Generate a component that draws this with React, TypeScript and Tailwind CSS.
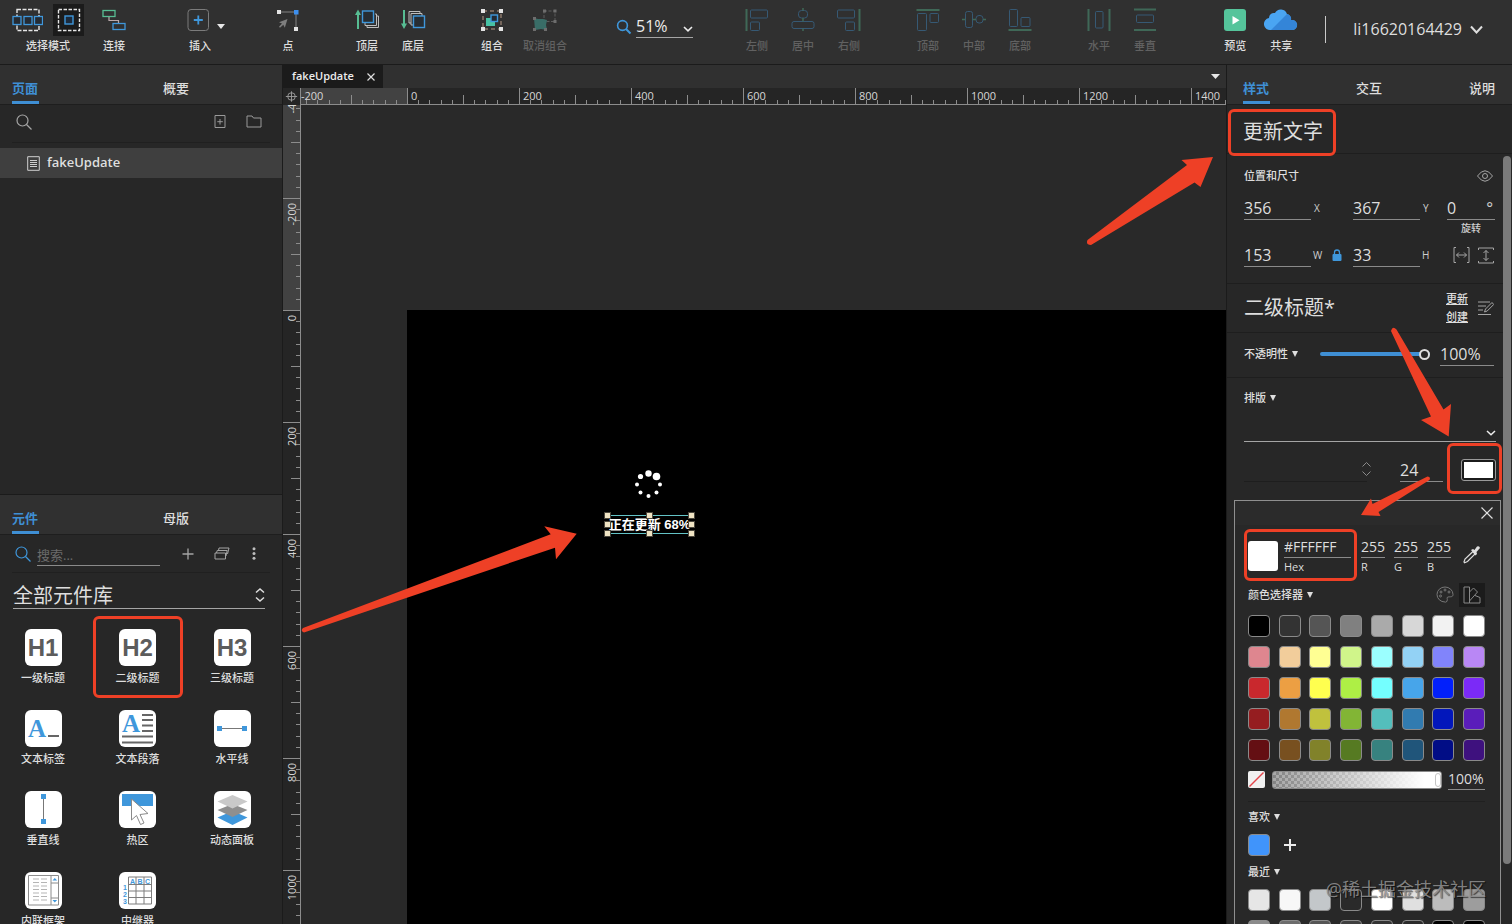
import { useState } from "react";
import type { ReactNode } from "react";

const blue = "#3f97db";
const green = "#57bd93";
const red = "#ee4026";

const palette = [
  "#000000", "#333333", "#555555", "#808080", "#aaaaaa", "#d7d7d7", "#f2f2f2", "#ffffff",
  "#de868f", "#f2cd9b", "#ffff93", "#d0f58a", "#9bffff", "#93d2f5", "#8184fb", "#b987f5",
  "#c9282d", "#ec9f43", "#ffff4f", "#aeef45", "#74ffff", "#47a5ea", "#0220fb", "#7b2af7",
  "#951d20", "#b07830", "#c0c13d", "#82b535", "#54bebc", "#317bb0", "#0217bb", "#5a1dba",
  "#640f13", "#785020", "#81822a", "#567a22", "#37827f", "#20557a", "#010d86", "#3e117e",
];

const recents = [
  "#e6e6e6", "#f7f7f7", "#c3c7ca", "#2a2a2a", "#ffffff", "#e0e0e0", "#bcbcbc", "#9d9d9d",
  "#8a8a8a", "#6c6c6c", "#555555", "#3f3f3f", "#333333", "#2a2a2a", "#000000", "#000000",
];

function Tool({ label, dim, wide, children }: { label: string; dim?: boolean; wide?: boolean; children: ReactNode }) {
  return (
    <button
      className={`flex flex-col items-center gap-1.5 pt-2 ${wide ? "w-[60px]" : "w-[46px]"} ${dim ? "text-[#616161]" : "text-[#dedede]"}`}
      disabled={dim}
    >
      <svg width="28" height="24" viewBox="0 0 28 24" fill="none" className={dim ? "opacity-40" : ""}>
        {children}
      </svg>
      <span className="text-[11px] leading-4 font-medium whitespace-nowrap">{label}</span>
    </button>
  );
}

function TopBar() {
  return (
    <header className="flex h-[65px] shrink-0 border-b border-[#1b1b1b] bg-[#303030] pl-2 pr-[29px]">
      <div className="flex w-[80px] flex-col items-center gap-0.5 pt-1 text-[#dedede]">
        <div className="flex gap-[10px]">
          <button aria-label="相交选择" className="flex h-8 w-[31px] items-center justify-center">
            <svg width="31" height="24" viewBox="0 0 31 24" fill="none">
              <rect x="5" y="1.5" width="22" height="21" stroke="#e6e6e6" strokeWidth="1.4" strokeDasharray="4 1.5" />
              <rect x="1" y="8.5" width="8" height="8" fill="#252b33" stroke={blue} strokeWidth="1.3" />
              <rect x="12" y="8.5" width="8" height="8" fill="#252b33" stroke={blue} strokeWidth="1.3" />
              <rect x="22.5" y="8.5" width="8" height="8" fill="#252b33" stroke={blue} strokeWidth="1.3" />
            </svg>
          </button>
          <button aria-label="包含选择" className="flex h-8 w-[31px] items-center justify-center bg-[#1b1b1b]">
            <svg width="24" height="24" viewBox="0 0 24 24" fill="none">
              <rect x="1.5" y="1.5" width="21" height="21" stroke="#e6e6e6" strokeWidth="1.4" strokeDasharray="3.5 1.5" />
              <rect x="8" y="8" width="8" height="8" fill="#1c2a3b" stroke={blue} strokeWidth="1.4" />
            </svg>
          </button>
        </div>
        <span className="text-[11px] leading-4 font-medium">选择模式</span>
      </div>
      <div className="ml-[3px] flex">
        <Tool label="连接">
          <rect x="3" y="2.5" width="12" height="6" stroke={green} strokeWidth="1.3" />
          <rect x="13" y="15.5" width="12" height="6" stroke={blue} strokeWidth="1.3" />
          <path d="M9 9v3.500h9.500v2.500" stroke="#b9a9ab" strokeWidth="1.2" />
        </Tool>
      </div>
      <div className="ml-10 flex">
        <div className="relative flex">
          <Tool label="插入">
            <rect x="2" y="1.5" width="20.5" height="21" rx="3" stroke="#7b7b7b" />
            <path d="M12.300 7.500v9M7.800 12h9" stroke={blue} strokeWidth="1.8" />
          </Tool>
          <svg width="8" height="5" viewBox="0 0 8 5" className="absolute left-10 top-[24px]">
            <path d="M0 0h8l-4 5z" fill="#e8e8e8" />
          </svg>
        </div>
      </div>
      <div className="ml-[42px] flex">
        <Tool label="点">
          <path d="M5 4h17v17" stroke="#828282" />
          <rect x="3" y="2" width="4" height="4" fill="#e3e3e3" />
          <rect x="20" y="2" width="4.5" height="4.5" fill="#3d8fee" />
          <rect x="20" y="19" width="4" height="4" fill="#e3e3e3" />
          <path d="M13.500 11l-8.500 3.200 3 1.400-3 3.200 1 1 3.300-3 1.500 3z" fill="#7e7e7e" />
        </Tool>
      </div>
      <div className="ml-[33px] flex">
        <Tool label="顶层">
          <path d="M5 21V4" stroke={green} strokeWidth="2" />
          <path d="M2 7L5 1.500 8 7z" fill={green} />
          <path d="M14 17v2.500h11.500V8H24" stroke="#bdbdbd" />
          <path d="M12 15v2.500h11.500V6H22" stroke="#bdbdbd" />
          <rect x="9.5" y="3" width="11" height="11.5" fill="#272d33" stroke={blue} strokeWidth="1.4" />
        </Tool>
        <Tool label="底层">
          <path d="M5 2v17" stroke={green} strokeWidth="2" />
          <path d="M2 15.500L5 21l3-5.500z" fill={green} />
          <path d="M12 15h-2V3.500h11V6" stroke="#bdbdbd" />
          <path d="M14 17h-2V5.500h11V8" stroke="#bdbdbd" />
          <rect x="14.5" y="8" width="11" height="11.5" fill="#272d33" stroke={blue} strokeWidth="1.4" />
        </Tool>
      </div>
      <div className="ml-[33px] flex">
        <Tool label="组合">
          <rect x="5" y="3" width="18" height="18" stroke="#b89a86" strokeDasharray="4 3" />
          <path d="M8 10h6v4h3v4H8z" fill="#48c2a4" />
          <rect x="13" y="7" width="6.5" height="6.5" fill="#232a33" stroke={blue} strokeWidth="1.4" />
          <path d="M3 1h4v4H3zM21 1h4v4h-4zM3 19h4v4H3zM21 19h4v4h-4z" fill="#e3e3e3" />
        </Tool>
        <Tool label="取消组合" dim wide>
          <rect x="13" y="3" width="11" height="10.5" stroke="#a0a0a0" strokeDasharray="3 1.5" />
          <path d="M3 10l4 1h5l4 1-1 5 1 5-6-1-6 1z" fill="#48c8bb" />
          <path d="M12 1.500h3v3h-3zM22.500 1.500h3v3h-3zM22.500 12h3v3h-3zM2 9h3v3H2zM2 20h3v3H2zM13 20h3v3h-3z" fill="#c8c8c8" />
        </Tool>
      </div>
      <div className="ml-[41px] flex w-[78px] items-start gap-1 pt-[14px]">
        <svg width="16" height="16" viewBox="0 0 16 16" fill="none" className="mt-[5px] shrink-0">
          <circle cx="6.5" cy="6.5" r="4.9" stroke={blue} strokeWidth="1.6" />
          <path d="M10 10l4.500 4.500" stroke={blue} strokeWidth="2" />
        </svg>
        <div className="relative w-[57px]">
          <select aria-label="缩放" className="h-[23px] w-full appearance-none border-b border-[#a5a5a5] bg-transparent text-base leading-5 text-[#ececec]">
            <option>51%</option>
          </select>
          <svg width="10" height="6" viewBox="0 0 10 6" fill="none" className="pointer-events-none absolute right-0 top-[12px]">
            <path d="M1 1l4 3.800L9 1" stroke="#ececec" strokeWidth="1.6" />
          </svg>
        </div>
      </div>
      <div className="ml-10 flex">
        <Tool label="左侧" dim>
          <path d="M3.500 1v22" stroke={green} strokeWidth="2" />
          <rect x="7.5" y="2" width="17" height="8" rx="1" stroke={blue} />
          <rect x="7.5" y="14" width="9" height="8.5" rx="1" stroke={blue} />
        </Tool>
        <Tool label="居中" dim>
          <rect x="9.5" y="2.5" width="9" height="7.5" rx="3" stroke={blue} />
          <rect x="3" y="13.5" width="22" height="7" rx="2" stroke={blue} />
          <path d="M14 0v2.500M14 10v3.500M14 20.500V23" stroke={green} strokeWidth="1.5" />
        </Tool>
        <Tool label="右侧" dim>
          <path d="M24.500 1v22" stroke={green} strokeWidth="2" />
          <rect x="2.5" y="2" width="17" height="8" rx="1" stroke={blue} />
          <rect x="10.5" y="14" width="9" height="8.5" rx="1" stroke={blue} />
        </Tool>
      </div>
      <div className="ml-[33px] flex">
        <Tool label="顶部" dim>
          <path d="M2.500 2h23" stroke={green} strokeWidth="2" />
          <rect x="3.5" y="5.5" width="9" height="17" rx="1" stroke={blue} />
          <rect x="16" y="5.5" width="8.5" height="9" rx="1" stroke={blue} />
        </Tool>
        <Tool label="中部" dim>
          <rect x="5.5" y="3.5" width="7" height="16" rx="2" stroke={blue} />
          <rect x="16" y="7.5" width="7" height="7.5" rx="3" stroke={blue} />
          <path d="M2 11.500h3.500M12.500 11.500H16M23 11.500h3" stroke={green} strokeWidth="1.5" />
        </Tool>
        <Tool label="底部" dim>
          <path d="M2.500 22h23" stroke={green} strokeWidth="2" />
          <rect x="3.5" y="1.5" width="8" height="17" rx="1" stroke={blue} />
          <rect x="15" y="9.5" width="9" height="9" rx="1" stroke={blue} />
        </Tool>
      </div>
      <div className="ml-[33px] flex">
        <Tool label="水平" dim>
          <path d="M3.500 1v22M24.500 1v22" stroke={green} strokeWidth="2" />
          <rect x="10.5" y="3.5" width="7.5" height="16.5" rx="1" stroke={blue} />
        </Tool>
        <Tool label="垂直" dim>
          <path d="M3 1.500h22M3 22h22" stroke={green} strokeWidth="2" />
          <rect x="5.5" y="7" width="17" height="7.5" rx="1" stroke={blue} />
        </Tool>
      </div>
      <div className="ml-auto flex">
        <Tool label="预览">
          <rect x="3" y="1" width="22" height="22" rx="3" fill="#55c49b" />
          <path d="M11.500 8v8.500l7-4.200z" fill="#fff" />
        </Tool>
        <button className="flex w-[46px] flex-col items-center gap-1.5 pt-2 text-[#dedede]">
          <svg width="34" height="24" viewBox="0 0 34 24">
            <path d="M7 22a6 6 0 0 1-2-12 5 5 0 0 1 6-5 6.500 6.500 0 0 1 12 1 5 5 0 0 1 4 6 5 5 0 0 1 2 10z" fill="#4aa5f2" />
            <path d="M7 22L20 9l3-3a5 5 0 0 1 4 6 5 5 0 0 1 2 10z" fill="#3485d8" />
          </svg>
          <span className="text-[11px] leading-4 font-medium">共享</span>
        </button>
        <div className="ml-[21px] mt-4 h-[27px] w-px bg-[#c9c9c9]" />
        <button className="ml-[27px] flex h-[58px] items-center gap-2 text-base text-[#dedede]">
          li16620164429
          <svg width="13" height="9" viewBox="0 0 13 9" fill="none">
            <path d="M1 1.500l5.500 6L12 1.500" stroke="#dedede" strokeWidth="2" />
          </svg>
        </button>
      </div>
    </header>
  );
}

function Tab({ label, active }: { label: string; active?: boolean }) {
  return (
    <button
      role="tab"
      aria-selected={!!active}
      className={`w-[27px] whitespace-nowrap border-b-[3px] pb-[3px] text-left text-[13px] leading-5 ${
        active ? "border-[#3f8fd4] font-bold text-[#3f8fd4]" : "border-transparent font-medium text-[#dedede]"
      }`}
    >
      {label}
    </button>
  );
}

function SearchIcon({ color }: { color: string }) {
  return (
    <svg width="16" height="16" viewBox="0 0 16 16" fill="none" className="shrink-0">
      <circle cx="6.5" cy="6.5" r="5.5" stroke={color} strokeWidth="1.2" />
      <path d="M10.500 10.500l5 5" stroke={color} strokeWidth="1.2" />
    </svg>
  );
}

const widgets: { label: string; heading?: string; icon?: ReactNode }[] = [
  { label: "一级标题", heading: "H1" },
  { label: "二级标题", heading: "H2" },
  { label: "三级标题", heading: "H3" },
  {
    label: "文本标签",
    icon: (
      <>
        <text x="3" y="27" fontSize="25" fontWeight="bold" fontFamily="Liberation Serif, serif" fill={blue}>A</text>
        <path d="M23 26h11" stroke="#666" strokeWidth="2" />
      </>
    ),
  },
  {
    label: "文本段落",
    icon: (
      <>
        <text x="3" y="22" fontSize="25" fontWeight="bold" fontFamily="Liberation Serif, serif" fill={blue}>A</text>
        <path d="M23 5h11M23 10h11M23 15.500h11M23 21h11M3 26.500h31M3 32.500h31" stroke="#666" strokeWidth="1.8" />
      </>
    ),
  },
  {
    label: "水平线",
    icon: (
      <>
        <path d="M6 18.500h25" stroke="#777" />
        <path d="M3 16h5v5H3zM28 16h5v5h-5z" fill={blue} />
      </>
    ),
  },
  {
    label: "垂直线",
    icon: (
      <>
        <path d="M18.500 6v25" stroke="#777" />
        <path d="M16 3h5v5h-5zM16 28h5v5h-5z" fill={blue} />
      </>
    ),
  },
  {
    label: "热区",
    icon: (
      <>
        <path d="M3 3h31v12H3z" fill={blue} />
        <path d="M12.500 8v21l5-4.500 4 9 3.500-1.500-4-8.500 8-1z" fill="#fff" stroke="#8a8a8a" />
      </>
    ),
  },
  {
    label: "动态面板",
    icon: (
      <>
        <path d="M3.500 26.500L18.500 20l15 6.500-15 7.500z" fill={blue} />
        <path d="M3.500 19L18.500 13l15 6-15 7z" fill="#8f8f8f" />
        <path d="M3.500 10.500L18.500 4l15 6.500-15 7z" fill="#c9c9c9" />
      </>
    ),
  },
  {
    label: "内联框架",
    icon: (
      <>
        <path d="M3.500 3.500h30v29.500h-30zM26 3.500V33M26 11h7.500M26 26h7.500" fill="none" stroke="#8c8c8c" />
        <path d="M8 7h6M16 7h6M8 10.500h6M16 10.500h6M8 14h6M16 14h6M8 17.500h6M16 17.500h6M8 21h6M16 21h6M8 24.500h6M16 24.500h6M8 28h6M16 28h6" stroke="#b5b5b5" />
        <path d="M27.500 8.500l2.300-2.500 2.300 2.500zM27.500 28l2.300 2.500 2.300-2.500z" fill={blue} />
      </>
    ),
  },
  {
    label: "中继器",
    icon: (
      <>
        <path d="M9.500 5h23v27h-23zM9.500 12.500h23M9.500 19h23M9.500 25.500h23M17 5v27M25 5v27" fill="none" stroke="#7d7d7d" />
        <g fontSize="7" fontWeight="bold" fontFamily="Liberation Sans, sans-serif" fill={blue}>
          <text x="11" y="11.5">A</text>
          <text x="18.5" y="11.5">B</text>
          <text x="26" y="11.5">C</text>
          <text x="4" y="18">1</text>
          <text x="4" y="25">2</text>
          <text x="4" y="32">3</text>
        </g>
      </>
    ),
  },
];

function LeftPanel() {
  const [search, setSearch] = useState("");

  return (
    <aside className="flex w-[283px] shrink-0 flex-col border-r border-[#1b1b1b] bg-[#272727]">
      <section className="flex min-h-0 flex-1 flex-col">
        <div role="tablist" className="grid h-10 shrink-0 grid-cols-[151px_1fr] items-end border-b border-[#1e1e1e] bg-[#303030] pl-3">
          <Tab label="页面" active />
          <Tab label="概要" />
        </div>
        <div className="mx-3 flex h-[38px] shrink-0 items-center border-b border-[#202020] pb-1 pl-1 pr-2 text-[#9a9a9a]">
          <button aria-label="搜索页面" className="mr-auto">
            <SearchIcon color="#a5a5a5" />
          </button>
          <button aria-label="添加页面">
            <svg width="12" height="13" viewBox="0 0 12 13" fill="none" stroke="currentColor">
              <path d="M1 .5h10v12H1zM6 4v5.500M3.300 6.700h5.500" />
            </svg>
          </button>
          <button aria-label="添加文件夹" className="ml-5">
            <svg width="16" height="13" viewBox="0 0 16 13" fill="none" stroke="currentColor">
              <path d="M1 1h5l1.500 2H15v9H1z" />
            </svg>
          </button>
        </div>
        <a href="#fakeUpdate" className="mt-[5px] flex h-[30px] shrink-0 items-center gap-[7px] bg-[#3f3f3f] pl-[27px] text-[13px] font-semibold text-[#dedede]">
          <svg width="13" height="15" viewBox="0 0 13 15" fill="none" stroke="#cfcfcf">
            <path d="M.7.700h11.600v13.600H.7zM3 4.500h7M3 6.500h7M3 8.500h7M3 10.500h7" />
          </svg>
          fakeUpdate
        </a>
      </section>

      <section className="flex min-h-0 flex-1 flex-col overflow-hidden border-t border-[#1b1b1b]">
        <div role="tablist" className="grid h-10 shrink-0 grid-cols-[151px_1fr] items-end border-b border-[#1e1e1e] bg-[#303030] pl-3">
          <Tab label="元件" active />
          <Tab label="母版" />
        </div>
        <div className="mx-3 flex h-[38px] shrink-0 items-center border-b border-[#202020] pl-[3px] pr-[14px] text-[#a5a5a5]">
          <SearchIcon color={blue} />
          <input
            aria-label="搜索元件"
            placeholder="搜索..."
            value={search}
            onChange={(e) => setSearch(e.target.value)}
            className="ml-1.5 mr-[22px] mt-1 h-5 w-[123px] min-w-0 flex-1 border-b border-[#8a8a8a] bg-transparent text-[13px] text-[#dedede] placeholder-[#6b6b6b] outline-none"
          />
          <button aria-label="添加元件库">
            <svg width="12" height="12" viewBox="0 0 12 12" fill="none" stroke="currentColor">
              <path d="M6 .5v11M.5 6h11" strokeWidth="1.3" />
            </svg>
          </button>
          <button aria-label="管理元件库" className="ml-5">
            <svg width="16" height="13" viewBox="0 0 16 13" fill="none" stroke="currentColor">
              <path d="M1 6h10.500v6H1zM2.500 6l.7-2.500h10L12 9M4.500 3.500L5 1h10l-1.500 6" />
            </svg>
          </button>
          <button aria-label="更多" className="ml-[22px]">
            <svg width="4" height="13" viewBox="0 0 4 13" fill="#bdbdbd">
              <circle cx="2" cy="1.7" r="1.5" />
              <circle cx="2" cy="6.5" r="1.5" />
              <circle cx="2" cy="11.3" r="1.5" />
            </svg>
          </button>
        </div>
        <div className="relative ml-[13px] mr-[17px] mt-2 shrink-0">
          <select aria-label="元件库" className="h-7 w-full appearance-none border-b border-[#a5a5a5] bg-transparent pt-0.5 text-xl leading-6 text-[#dedede]">
            <option>全部元件库</option>
          </select>
          <svg width="10" height="14" viewBox="0 0 10 14" fill="none" className="pointer-events-none absolute right-0 top-[7px]">
            <path d="M1 4.500L5 1l4 3.500M1 9.500L5 13l4-3.500" stroke="#dedede" strokeWidth="1.5" />
          </svg>
        </div>
        <div className="mt-5 grid grid-cols-[58px_58px_58px] justify-between gap-y-6 pl-[14px] pr-[21px]">
          {widgets.map((w) => (
            <button key={w.label} className="relative flex flex-col items-center gap-1">
              <span className="flex size-[37px] items-center justify-center rounded-md bg-white">
                {w.heading ? (
                  <span className="font-['Liberation_Sans',sans-serif] text-2xl font-bold text-[#5c5c5c]">{w.heading}</span>
                ) : (
                  <svg width="37" height="37" viewBox="0 0 37 37">{w.icon}</svg>
                )}
              </span>
              <span className="whitespace-nowrap text-[11px] leading-4 font-medium text-[#dedede]">{w.label}</span>
              {w.heading === "H2" && (
                <span className="absolute -inset-x-4 -bottom-3 -top-[13px] rounded-md border-[3px] border-[#ee4026]" />
              )}
            </button>
          ))}
        </div>
      </section>
    </aside>
  );
}

function HorizontalRuler() {
  const ticks = Array.from({ length: 160 }, (_, i) => i - 9);
  const majors = Array.from({ length: 9 }, (_, i) => i - 1);
  return (
    <svg width="100%" height="17" className="block bg-[#252525]">
      <rect width="106" height="17" fill="#424242" />
      {ticks.map((t) => {
        const x = 106 + t * 11.2;
        const h = t % 10 === 0 ? 17 : t % 5 === 0 ? 10 : 5;
        return <path key={t} d={`M${Math.round(x) + 0.5} ${17 - h}V17`} stroke="#8c8c8c" />;
      })}
      {majors.map((m) => (
        <text key={m} x={m < 0 ? 0 : 110 + m * 112} y="12" fontSize="11" fill="#d6d6d6">
          {m * 200}
        </text>
      ))}
      <path d="M0 16.500h4000" stroke="#8c8c8c" />
    </svg>
  );
}

function VerticalRuler() {
  const ticks = Array.from({ length: 130 }, (_, i) => i - 18);
  const majors = Array.from({ length: 8 }, (_, i) => i - 2);
  return (
    <svg width="18" height="100%" className="block shrink-0 bg-[#252525]">
      <rect width="18" height="205" fill="#424242" />
      {ticks.map((t) => {
        const y = 205 + t * 11.2;
        const w = t % 10 === 0 ? 18 : t % 5 === 0 ? 10 : 5;
        return <path key={t} d={`M${18 - w} ${Math.round(y) + 0.5}H18`} stroke="#8c8c8c" />;
      })}
      {majors.map((m) => (
        <text
          key={m}
          fontSize="11"
          fill="#d6d6d6"
          textAnchor="end"
          transform={`translate(13 ${210 + m * 112}) rotate(-90)`}
        >
          {m * 200}
        </text>
      ))}
      <path d="M17.500 0v4000" stroke="#8c8c8c" />
    </svg>
  );
}

const handles = [[4, 4], [46, 4], [88, 4], [4, 13], [88, 13], [4, 22], [46, 22], [88, 22]];

function Canvas() {
  return (
    <main className="flex min-w-0 flex-1 flex-col bg-[#292929]">
      <div className="flex h-[23px] shrink-0 items-center bg-[#303030]">
        <div className="flex h-full w-[100px] items-center justify-between bg-[#1b1b1b] pl-[9px] pr-2">
          <button className="text-[11px] font-semibold text-[#ececec]">fakeUpdate</button>
          <button aria-label="关闭">
            <svg width="8" height="8" viewBox="0 0 8 8" stroke="#dedede" strokeWidth="1.2">
              <path d="M.5.500l7 7M7.500.500l-7 7" />
            </svg>
          </button>
        </div>
        <button aria-label="标签列表" className="ml-auto mr-1.5">
          <svg width="9" height="5" viewBox="0 0 9 5">
            <path d="M0 0h9L4.500 5z" fill="#e8e8e8" />
          </svg>
        </button>
      </div>
      <div className="flex shrink-0">
        <svg width="18" height="17" viewBox="0 0 18 17" fill="none" stroke="#9a9a9a" className="block shrink-0 border-r border-[#8c8c8c] bg-[#252525]">
          <circle cx="9" cy="8.5" r="4" />
          <path d="M9 3v11M3 8.500h12" />
        </svg>
        <div className="min-w-0 flex-1"><HorizontalRuler /></div>
      </div>
      <div className="flex min-h-0 flex-1">
        <VerticalRuler />
        <div className="relative min-w-0 flex-1 overflow-hidden">
          <div className="absolute bottom-0 left-[106px] right-0 top-[205px] bg-black" />
          <svg width="28" height="28" viewBox="0 0 28 28" fill="#fff" className="absolute left-[334px] top-[365px]">
            <circle cx="13.5" cy="3.5" r="3.2" />
            <circle cx="21.5" cy="6.5" r="3.8" />
            <circle cx="25" cy="14.5" r="2" />
            <circle cx="21.5" cy="22.5" r="2" />
            <circle cx="13.5" cy="26" r="2" />
            <circle cx="5.5" cy="22.5" r="2" />
            <circle cx="2" cy="14.5" r="2" />
            <circle cx="5.5" cy="6.5" r="2.6" />
          </svg>
          <p className="absolute left-[306px] top-[410px] flex h-[19px] w-[85px] items-center justify-center whitespace-nowrap border-y border-[#63c3c6] font-['Liberation_Sans','Noto_Sans_CJK_SC',sans-serif] text-[13px] font-bold text-white">
            正在更新 68%
          </p>
          <svg width="94" height="27" viewBox="0 0 94 27" className="absolute left-[301px] top-[406px]">
            {handles.map(([x, y]) => (
              <rect key={`${x}-${y}`} x={x - 1.5} y={y - 2.5} width="6" height="6" fill="#efe3c3" stroke="#4a463c" />
            ))}
          </svg>
          <svg width="280" height="110" viewBox="0 0 280 110" fill={red} className="absolute left-0 top-[420px]">
            <path d="M2 103L249.700 9.300 243.300 1.300 275.700 8.700 255 34.300 254 22.700 3 107.500Q-1 106 2 103z" />
          </svg>
          <svg width="130" height="92" viewBox="0 0 130 92" fill={red} className="absolute right-[10px] top-[50px]">
            <path d="M1.500 85L101 10 95.500 5 127 2 114.500 32 108.500 27.500 5 90Q-.500 90 1.500 85z" />
          </svg>
        </div>
      </div>
    </main>
  );
}

function Caret() {
  return (
    <svg width="6" height="6" viewBox="0 0 6 6">
      <path d="M0 0h6L3 6z" fill="#dedede" />
    </svg>
  );
}

function SectionLabel({ label }: { label: string }) {
  return (
    <button className="flex items-center gap-1 text-[11px] leading-4 font-medium text-[#dedede]">
      {label}
      <Caret />
    </button>
  );
}

const field = "h-6 w-full min-w-0 border-b border-[#8a8a8a] bg-transparent text-base leading-5 text-[#dedede] outline-none";

function Geometry() {
  return (
    <section className="shrink-0 border-b border-[#1e1e1e] pb-4 pl-[17px] pr-2 pt-[14px]">
      <div className="flex h-4 items-center justify-between text-[11px] font-medium text-[#dedede]">
        位置和尺寸
        <button aria-label="可见性" className="mr-0.5">
          <svg width="16" height="12" viewBox="0 0 16 12" fill="none" stroke="#a5a5a5">
            <path d="M.5 6Q8-4.500 15.500 6 8 16.500.500 6z" />
            <circle cx="8" cy="6" r="2.5" />
          </svg>
        </button>
      </div>
      <div className="mt-3 grid grid-cols-[1fr_42px_1fr_27px_48px] text-[#cfcfcf]">
        <input id="pos-x" defaultValue="356" className={field} />
        <label htmlFor="pos-x" className="pl-[3px] text-[10px] leading-6">X</label>
        <input id="pos-y" defaultValue="367" className={field} />
        <label htmlFor="pos-y" className="pl-[3px] text-[10px] leading-6">Y</label>
        <div>
          <div className="flex h-6 border-b border-[#8a8a8a]">
            <input id="rotation" defaultValue="0" className="h-[23px] w-full min-w-0 bg-transparent text-base leading-5 text-[#dedede] outline-none" />
            <span className="pr-0.5 text-base leading-6">°</span>
          </div>
          <label htmlFor="rotation" className="block text-center text-[10px] leading-4 font-medium">旋转</label>
        </div>
      </div>
      <div className="mt-[7px] grid grid-cols-[1fr_42px_1fr_27px_48px] text-[#cfcfcf]">
        <input id="size-w" defaultValue="153" className={field} />
        <div className="flex items-center justify-between pl-0.5 pr-[11px]">
          <label htmlFor="size-w" className="text-[10px] leading-6">W</label>
          <button aria-label="锁定宽高比">
            <svg width="10" height="13" viewBox="0 0 10 13">
              <path d="M2.500 6V3.500a2.500 2.500 0 0 1 5 0V6" fill="none" stroke={blue} strokeWidth="1.3" />
              <rect x=".5" y="5" width="9" height="7" rx="1" fill={blue} />
            </svg>
          </button>
        </div>
        <input id="size-h" defaultValue="33" className={field} />
        <label htmlFor="size-h" className="pl-0.5 text-[10px] leading-6">H</label>
        <div className="flex items-center justify-between pl-1.5 pr-px">
          <button aria-label="适应宽度">
            <svg width="17" height="16" viewBox="0 0 17 16" fill="none" stroke="#a5a5a5">
              <path d="M3 .5H1v15h2M14 .500h2v15h-2M3.500 8h10M6 5.500L3.500 8 6 10.500M11 5.500L13.500 8 11 10.500" />
            </svg>
          </button>
          <button aria-label="适应高度">
            <svg width="16" height="17" viewBox="0 0 16 17" fill="none" stroke="#a5a5a5">
              <path d="M.5 3V1h15v2M.500 14v2h15v-2M8 3.500v10M5.500 6L8 3.500 10.500 6M5.500 11L8 13.500 10.500 11" />
            </svg>
          </button>
        </div>
      </div>
    </section>
  );
}

function Swatch({ color }: { color: string }) {
  return <button aria-label={color} className="size-[22px] rounded-sm border border-[#8a8a8a]" style={{ backgroundColor: color }} />;
}

const channels = ["R", "G", "B"];

function ColorPicker() {
  return (
    <div role="dialog" aria-label="颜色" className="ml-[7px] mr-0.5 mt-[18px] min-h-0 flex-1 border border-b-0 border-[#8f8f8f] bg-[#282828] text-[#dedede]">
      <div className="flex h-6 items-center justify-end bg-[#2b2b2b] pr-[7px]">
        <button aria-label="关闭">
          <svg width="12" height="12" viewBox="0 0 12 12" stroke="#dedede" strokeWidth="1.2">
            <path d="M.5.500l11 11M11.500.500l-11 11" />
          </svg>
        </button>
      </div>
      <div className="pl-[13px] pr-[15px] pt-3">
        <div className="flex items-start text-sm">
          <div className="relative flex gap-1.5">
            <div className="mt-1 size-[30px] rounded-[3px] bg-white" />
            <div className="w-[67px]">
              <input id="hex" defaultValue="#FFFFFF" className="h-5 w-full border-b border-[#8a8a8a] bg-transparent outline-none" />
              <label htmlFor="hex" className="block pt-px text-[11px] leading-4">Hex</label>
            </div>
            <div className="pointer-events-none absolute -left-1 -right-1.5 -bottom-1.5 -top-2 rounded-md border-[3px] border-[#ee4026]" />
          </div>
          <div className="ml-[10px] flex gap-[9px]">
            {channels.map((c) => (
              <div key={c} className="w-6">
                <input id={c} defaultValue="255" className="h-5 w-full border-b border-[#8a8a8a] bg-transparent outline-none" />
                <label htmlFor={c} className="block pt-px text-[11px] leading-4">{c}</label>
              </div>
            ))}
          </div>
          <button aria-label="吸管" className="ml-auto mr-1 mt-2">
            <svg width="18" height="19" viewBox="0 0 18 19" fill="none">
              <path d="M10 6.500l2 2.500-7.500 7.500-3 1.200L1 17l1-3z" stroke="#dedede" strokeWidth="1.2" />
              <path d="M8 5l2-1 1.500 1L14 1.500q2.500-1 3 1.500l-3.500 4 .5 2-1.500 1.500z" fill="#dedede" />
            </svg>
          </button>
        </div>
        <div className="mt-2 flex h-6 items-center justify-between">
          <SectionLabel label="颜色选择器" />
          <div className="flex">
            <button aria-label="调色盘" className="flex h-6 w-7 items-center justify-center">
              <svg width="18" height="17" viewBox="0 0 18 17" fill="none" stroke="#777">
                <path d="M9 16A8 7.500 0 1 1 17 8.500c0 3-3 2-5 2.500s0 2-1 4-1.500 1-2 1z" />
                <circle cx="5" cy="6" r="1" />
                <circle cx="9" cy="4" r="1" />
                <circle cx="13" cy="6" r="1" />
                <circle cx="4.5" cy="10" r="1" />
              </svg>
            </button>
            <button aria-label="色板" className="flex h-6 w-[26px] items-center justify-center bg-[#1b1b1b]">
              <svg width="18" height="18" viewBox="0 0 18 18" fill="none" stroke="#888">
                <path d="M1 1h5.500v16H1zM6.500 6l4-4 4 4-8 9M12 9.500l5 2V17H6.500" />
              </svg>
            </button>
          </div>
        </div>
        <div className="mt-2 grid grid-cols-[repeat(8,22px)] justify-between gap-y-[9px]">
          {palette.map((c) => <Swatch key={c} color={c} />)}
        </div>
        <div className="mt-[10px] flex h-[18px] items-center">
          <button aria-label="无颜色">
            <svg width="17" height="17" viewBox="0 0 17 17">
              <rect width="17" height="17" rx="2" fill="#f0f0f0" />
              <path d="M1.500 15.500l14-14" stroke="#e4454b" strokeWidth="1.5" />
            </svg>
          </button>
          <input
            type="range"
            aria-label="透明度"
            defaultValue="100"
            className="ml-[7px] mr-1.5 h-[18px] min-w-0 flex-1 appearance-none rounded-[3px] border border-[#8a8a8a] bg-[linear-gradient(to_right,rgba(255,255,255,0.05),#fff_90%),repeating-conic-gradient(#7c7c7c_0_25%,#a2a2a2_0_50%)] bg-[length:auto,6px_6px] [&::-webkit-slider-thumb]:h-[14px] [&::-webkit-slider-thumb]:w-1.5 [&::-webkit-slider-thumb]:appearance-none [&::-webkit-slider-thumb]:rounded-full [&::-webkit-slider-thumb]:border [&::-webkit-slider-thumb]:border-[#c4c4c4]"
          />
          <input aria-label="透明度数值" defaultValue="100%" className="h-5 w-[37px] border-b border-[#8a8a8a] bg-transparent text-sm outline-none" />
        </div>
        <div className="mb-[7px] mt-3 border-t border-[#202020]" />
        <SectionLabel label="喜欢" />
        <div className="mt-[9px] flex items-center gap-[14px]">
          <Swatch color="#4094fb" />
          <button aria-label="添加喜欢的颜色">
            <svg width="12" height="12" viewBox="0 0 12 12" stroke="#ececec" strokeWidth="2">
              <path d="M6 0v12M0 6h12" />
            </svg>
          </button>
        </div>
        <div className="mt-2"><SectionLabel label="最近" /></div>
        <div className="relative mt-[9px]">
          <div className="grid grid-cols-[repeat(8,22px)] justify-between gap-y-[9px]">
            {recents.map((c, i) => <Swatch key={i} color={c} />)}
          </div>
          <p className="pointer-events-none absolute -right-px -top-[14px] whitespace-nowrap text-lg leading-7 text-[#8e8e8e]/90 [text-shadow:1px_1px_1px_rgba(0,0,0,0.6)]">@稀土掘金技术社区</p>
        </div>
      </div>
    </div>
  );
}

function RightPanel() {
  return (
    <aside className="relative flex w-[286px] shrink-0 flex-col overflow-hidden border-l border-[#1b1b1b] bg-[#272727]">
      <div role="tablist" className="flex h-10 shrink-0 items-end justify-between border-b border-[#1e1e1e] bg-[#303030] pl-4 pr-4">
        <Tab label="样式" active />
        <Tab label="交互" />
        <Tab label="说明" />
      </div>
      <div className="flex h-[49px] shrink-0 items-start border-b border-[#1e1e1e] pl-px pt-1">
        <h2 className="h-[47px] rounded-md border-[3px] border-[#ee4026] pl-3 pr-[10px] text-xl leading-[39px] text-[#dedede]">更新文字</h2>
      </div>
      <div className="flex min-h-0 flex-1">
        <div className="flex min-w-0 flex-1 flex-col">
          <Geometry />
          <section className="flex h-[49px] shrink-0 items-center border-b border-[#1e1e1e] pl-[17px] pr-[9px] text-[#dedede]">
            <h3 className="mr-auto text-xl">二级标题*</h3>
            <div className="mr-[10px] flex flex-col gap-0.5 text-[11px] leading-4 font-medium underline">
              <a href="#update">更新</a>
              <a href="#create">创建</a>
            </div>
            <button aria-label="管理样式">
              <svg width="16" height="15" viewBox="0 0 16 15" fill="none" stroke="#a5a5a5">
                <path d="M0 1h12M0 5h8M0 9h5M0 13.500h13M6.500 11l1-3L14 1.500l1.700 2-6.500 6.500z" />
              </svg>
            </button>
          </section>
          <section className="flex h-[45px] shrink-0 items-center border-b border-[#1e1e1e] pb-0.5 pl-[17px] pr-[9px]">
            <SectionLabel label="不透明性" />
            <input
              type="range"
              aria-label="不透明性"
              defaultValue="100"
              className="ml-[22px] mr-[10px] h-1 min-w-0 flex-1 appearance-none rounded-full bg-[#3f8fd4] [&::-webkit-slider-thumb]:size-[11px] [&::-webkit-slider-thumb]:appearance-none [&::-webkit-slider-thumb]:rounded-full [&::-webkit-slider-thumb]:border-2 [&::-webkit-slider-thumb]:border-[#dedede] [&::-webkit-slider-thumb]:bg-[#272727]"
            />
            <input aria-label="不透明性数值" defaultValue="100%" className="h-6 w-[54px] border-b border-[#8a8a8a] bg-transparent text-base text-[#dedede] outline-none" />
          </section>
          <section className="shrink-0 pl-[17px] pr-[7px] pt-3">
            <SectionLabel label="排版" />
            <div className="relative mt-3">
              <select aria-label="字体" className="block h-6 w-full appearance-none border-b border-[#a5a5a5] bg-transparent text-base text-[#dedede]" />
              <svg width="10" height="6" viewBox="0 0 10 6" fill="none" className="pointer-events-none absolute right-0 top-3">
                <path d="M1 1l4 3.800L9 1" stroke="#ececec" strokeWidth="1.5" />
              </svg>
            </div>
            <div className="mt-4 flex items-center">
              <div className="relative min-w-0 flex-1">
                <select aria-label="字重" className="block h-6 w-full appearance-none border-b border-[#1e1e1e] bg-transparent" />
                <svg width="9" height="14" viewBox="0 0 9 14" fill="none" className="pointer-events-none absolute -right-1 top-1">
                  <path d="M.5 4.500l4-4 4 4M.500 9.500l4 4 4-4" stroke="#8a8a8a" />
                </svg>
              </div>
              <input aria-label="字号" defaultValue="24" className="ml-[33px] h-6 w-[43px] border-b border-[#8a8a8a] bg-transparent text-base text-[#dedede] outline-none" />
              <div className="relative ml-[18px]">
                <button aria-label="文字颜色" className="block h-[22px] w-[35px] rounded-[3px] border border-[#9a9a9a] bg-[#1b1b1b] p-[2px]">
                  <span className="block h-full bg-white" />
                </button>
                <div className="pointer-events-none absolute -bottom-[13px] -left-[14px] -right-[6px] -top-[16px] rounded-md border-[3px] border-[#ee4026]" />
              </div>
            </div>
          </section>
          <ColorPicker />
        </div>
        <div className="mt-0.5 h-[92%] w-2 shrink-0 rounded-full bg-[#7a7a7a]" />
        <div className="w-px shrink-0" />
      </div>
      <svg width="110" height="200" viewBox="0 0 110 200" fill={red} className="pointer-events-none absolute right-[50px] top-[260px]">
        <path d="M39 6Q40.500.500 44.500 4.500L91.500 84.500 99 79 96.700 111.500 69 95 79 91.500z" />
        <path d="M9 190L19 173.500 20.500 179 75.500 151.500Q79 151.500 77.500 155L26.500 187 28.500 191z" />
      </svg>
    </aside>
  );
}

export default function App() {
  return (
    <div className="flex h-screen flex-col overflow-hidden bg-[#272727] font-['Open_Sans','Noto_Sans_CJK_SC',sans-serif]">
      <TopBar />
      <div className="flex min-h-0 flex-1">
        <LeftPanel />
        <Canvas />
        <RightPanel />
      </div>
    </div>
  );
}
